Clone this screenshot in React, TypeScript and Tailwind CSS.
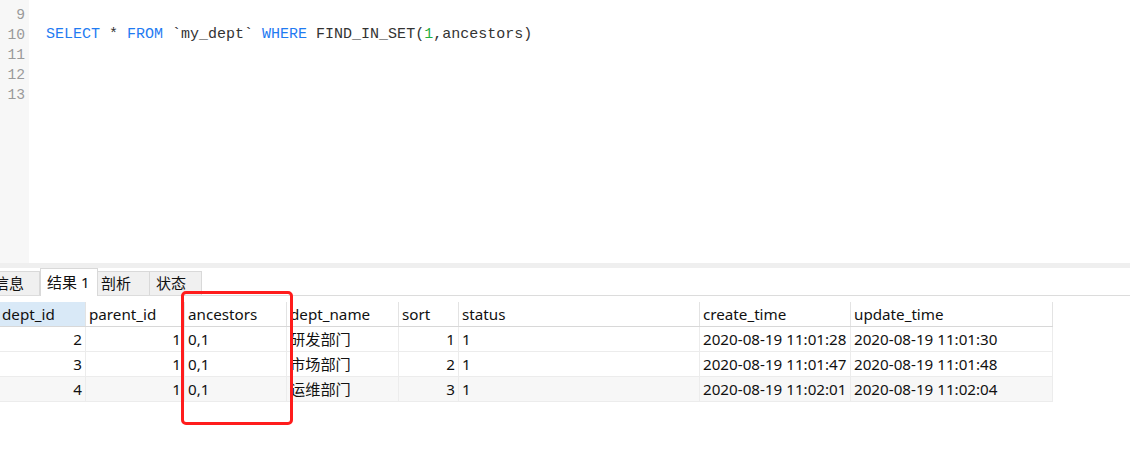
import React from "react";

const mono = { fontFamily: '"Liberation Mono", "DejaVu Sans Mono", monospace' };
const ui = { fontFamily: '"Noto Sans", "Noto Sans CJK SC", sans-serif' };

type Col = { key: string; label: string; w: string; right?: boolean };

const cols: Col[] = [
  { key: "dept_id", label: "dept_id", w: "w-[86px]", right: true },
  { key: "parent_id", label: "parent_id", w: "w-[99px]", right: true },
  { key: "ancestors", label: "ancestors", w: "w-[102px]" },
  { key: "dept_name", label: "dept_name", w: "w-[112px]" },
  { key: "sort", label: "sort", w: "w-[60px]", right: true },
  { key: "status", label: "status", w: "w-[241px]" },
  { key: "create_time", label: "create_time", w: "w-[151px]" },
  { key: "update_time", label: "update_time", w: "w-[202px]" },
];

const rows: Record<string, string>[] = [
  {
    dept_id: "2",
    parent_id: "1",
    ancestors: "0,1",
    dept_name: "研发部门",
    sort: "1",
    status: "1",
    create_time: "2020-08-19 11:01:28",
    update_time: "2020-08-19 11:01:30",
  },
  {
    dept_id: "3",
    parent_id: "1",
    ancestors: "0,1",
    dept_name: "市场部门",
    sort: "2",
    status: "1",
    create_time: "2020-08-19 11:01:47",
    update_time: "2020-08-19 11:01:48",
  },
  {
    dept_id: "4",
    parent_id: "1",
    ancestors: "0,1",
    dept_name: "运维部门",
    sort: "3",
    status: "1",
    create_time: "2020-08-19 11:02:01",
    update_time: "2020-08-19 11:02:04",
  },
];

export default function App() {
  return (
    <div className="relative w-[1130px] h-[453px] overflow-hidden bg-white text-[#111]">
      {/* Editor */}
      <div className="flex h-[263px]" style={mono}>
        <div className="w-[29px] bg-[#f7f7f7] pt-[5px] pr-[4px] text-right text-[14.67px] leading-[20px] text-[#9a9a9a]">
          <div>9</div>
          <div>10</div>
          <div>11</div>
          <div>12</div>
          <div>13</div>
        </div>
        <div className="flex-1 pt-[25px] pl-[17px] text-[15px] leading-[20px] text-[#333] whitespace-pre">
          <span className="text-[#1f7bf2]">SELECT</span> *{" "}
          <span className="text-[#1f7bf2]">FROM</span> `my_dept`{" "}
          <span className="text-[#1f7bf2]">WHERE</span> FIND_IN_SET(
          <span className="text-[#1fae3f]">1</span>,ancestors)
        </div>
      </div>

      <div className="h-[5px] bg-[#efefef]" />

      {/* Tabs */}
      <div
        className="flex items-end h-[28px] border-b border-[#dcdcdc] text-[15px]"
        style={ui}
      >
        <div className="h-[24px] w-[50px] -ml-[10px] bg-[#f0f0f0] border border-b-0 border-[#d9d9d9] flex items-center pl-[3px] overflow-hidden">
          信息
        </div>
        <div className="h-[28px] w-[58px] bg-white border border-b-0 border-[#d9d9d9] -mb-[1px] pb-[1px] flex items-center pl-[6px]">
          结果 1
        </div>
        <div className="h-[24px] w-[52px] bg-[#f0f0f0] border border-b-0 border-l-0 border-[#d9d9d9] flex items-center pl-[3px]">
          剖析
        </div>
        <div className="h-[24px] w-[52px] bg-[#f0f0f0] border border-b-0 border-l-0 border-[#d9d9d9] flex items-center pl-[6px]">
          状态
        </div>
      </div>

      {/* Grid */}
      <div className="w-[1053px] text-[15.2px]" style={ui}>
        <div className="flex h-[31px] pt-[6px] border-b border-[#d8d8d8]">
          {cols.map((c, i) => (
            <div
              key={c.key}
              className={`${c.w} h-[24px] flex items-center whitespace-nowrap overflow-hidden border-r border-[#e3e3e3] ${
                i === 0 ? "bg-[#d9e9f7] pl-[2px]" : "pl-[3px]"
              }`}
            >
              {c.label}
            </div>
          ))}
        </div>
        {rows.map((r, ri) => (
          <div
            key={ri}
            className={`flex h-[25px] border-b border-[#ececec] ${
              ri === 2 ? "bg-[#f7f7f7]" : "bg-white"
            }`}
          >
            {cols.map((c) => (
              <div
                key={c.key}
                className={`${c.w} h-[24px] flex items-center whitespace-nowrap overflow-hidden border-r border-[#ececec] ${
                  c.right ? "justify-end pr-[3px]" : "pl-[3px]"
                }`}
              >
                {r[c.key]}
              </div>
            ))}
          </div>
        ))}
      </div>

      {/* Highlight box */}
      <div className="absolute left-[181px] top-[291px] w-[112px] h-[134px] border-[3px] border-[#ff1c1c] rounded-[5px]" />
    </div>
  );
}
